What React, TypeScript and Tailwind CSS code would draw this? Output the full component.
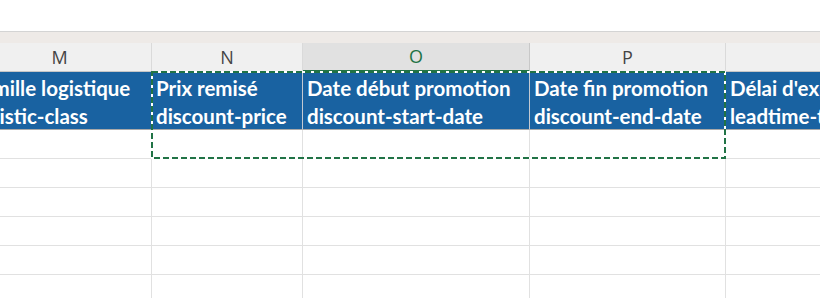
import React from 'react';

// columns of the visible sheet area, M starts off screen to the left
const columns = [
  { letter: 'M', width: 'w-[184px]', title: 'Famille logistique', code: 'logistic-class' },
  { letter: 'N', width: 'w-[151px]', title: 'Prix remisé', code: 'discount-price' },
  { letter: 'O', width: 'w-[227px]', title: 'Date début promotion', code: 'discount-start-date', selected: true },
  { letter: 'P', width: 'w-[196px]', title: 'Date fin promotion', code: 'discount-end-date' },
  { letter: '', width: 'w-[220px]', title: "Délai d'expédition", code: 'leadtime-to-ship' },
];

function Marquee() {
  return (
    <svg className="absolute left-[151px] top-[71px]" width="575" height="88">
      <rect x="1" y="1" width="573" height="86" fill="none" stroke="#ffffff" strokeWidth="2" />
      <rect x="1" y="1" width="573" height="86" fill="none" stroke="#217346" strokeWidth="2" strokeDasharray="6 3" />
    </svg>
  );
}

function App() {
  return (
    <div className="relative w-[820px] h-[298px] overflow-hidden bg-white">
      <div className="h-[31px] bg-white" />
      <div className="h-px bg-[#d4d4d4]" />
      <div className="h-[11px] bg-[#eeeae7]" />

      {/* column letters */}
      <div className="flex ml-[-32px] font-['Open_Sans',sans-serif] text-[18px] text-[#444444]">
        {columns.map((col, i) => (
          <div
            key={i}
            className={`${col.width} shrink-0 h-[29px] flex items-center justify-center border-r ${
              col.selected
                ? 'bg-[#e1e1e1] text-[#217346] border-b-2 border-b-[#217346] border-r-[#c8c8c8]'
                : 'bg-[#f0f0f0] border-b border-b-[#c6c6c6] border-r-[#dadada]'
            }`}
          >
            {col.letter}
          </div>
        ))}
      </div>

      {/* header cells */}
      <div className="flex ml-[-32px] font-['Lato',sans-serif] font-bold text-[20.5px] text-white">
        {columns.map((col, i) => (
          <div
            key={i}
            className={`${col.width} shrink-0 h-[58px] bg-[#1962a1] border-r border-r-[#c3c9d1] border-b border-b-[#a9a9a9] pt-[2px] pl-[4px] leading-[28px] whitespace-nowrap overflow-hidden`}
          >
            <div>{col.title}</div>
            <div>{col.code}</div>
          </div>
        ))}
      </div>

      {/* empty rows */}
      {[0, 1, 2, 3, 4, 5].map((r) => (
        <div key={r} className="flex ml-[-32px]">
          {columns.map((col, i) => (
            <div key={i} className={`${col.width} shrink-0 h-[29px] border-r border-b border-[#e1e1e1]`} />
          ))}
        </div>
      ))}

      <Marquee />
    </div>
  );
}

export default App;
